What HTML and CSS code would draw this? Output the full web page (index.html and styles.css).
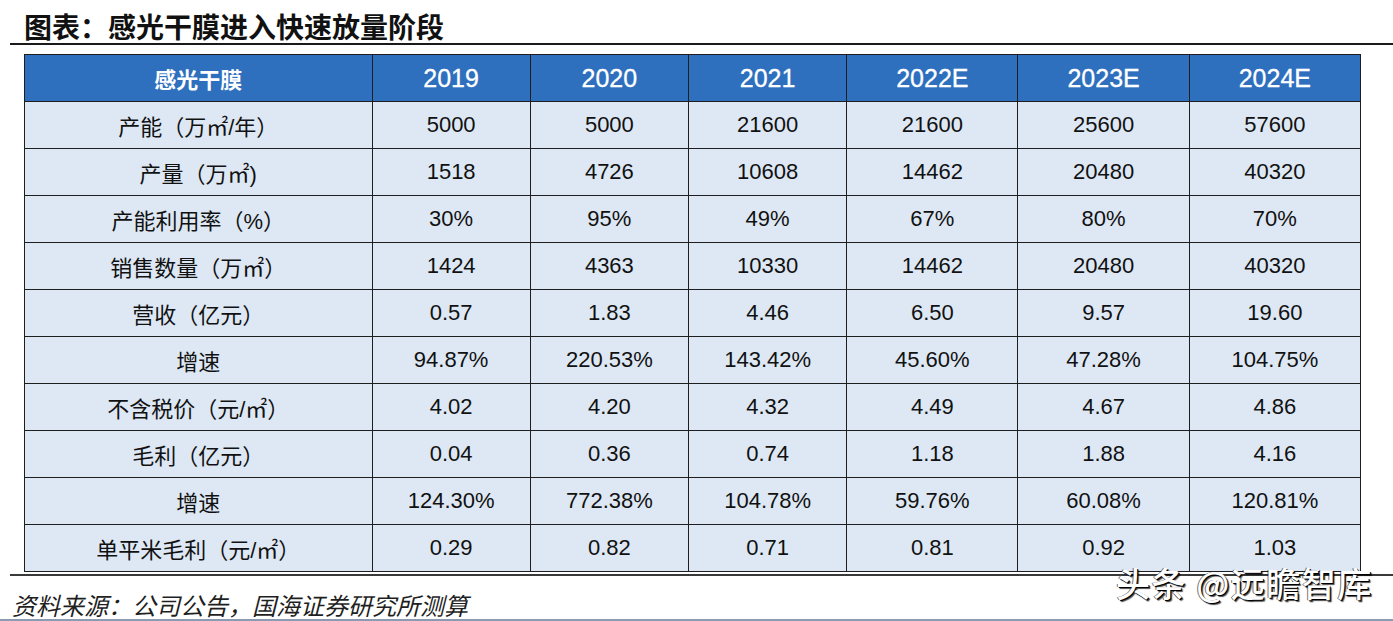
FILE: index.html
```html
<!DOCTYPE html>
<html lang="zh">
<head>
<meta charset="utf-8">
<title>图表：感光干膜进入快速放量阶段</title>
<link rel="stylesheet" href="styles.css">
</head>
<body>
<div class="page">
  <div class="title-bar">
    <h1 class="title">图表：感光干膜进入快速放量阶段</h1>
  </div>
  <table class="data">
    <colgroup>
      <col class="c-label"><col class="c-a"><col class="c-a"><col class="c-a"><col class="c-b"><col class="c-b"><col class="c-b">
    </colgroup>
    <thead>
      <tr><th class="label-head">感光干膜</th><th>2019</th><th>2020</th><th>2021</th><th>2022E</th><th>2023E</th><th>2024E</th></tr>
    </thead>
    <tbody>
      <tr><td class="label">产能（万㎡/年）</td><td>5000</td><td>5000</td><td>21600</td><td>21600</td><td>25600</td><td>57600</td></tr>
      <tr><td class="label">产量（万㎡)</td><td>1518</td><td>4726</td><td>10608</td><td>14462</td><td>20480</td><td>40320</td></tr>
      <tr><td class="label">产能利用率（%）</td><td>30%</td><td>95%</td><td>49%</td><td>67%</td><td>80%</td><td>70%</td></tr>
      <tr><td class="label">销售数量（万㎡）</td><td>1424</td><td>4363</td><td>10330</td><td>14462</td><td>20480</td><td>40320</td></tr>
      <tr><td class="label">营收（亿元）</td><td>0.57</td><td>1.83</td><td>4.46</td><td>6.50</td><td>9.57</td><td>19.60</td></tr>
      <tr><td class="label">增速</td><td>94.87%</td><td>220.53%</td><td>143.42%</td><td>45.60%</td><td>47.28%</td><td>104.75%</td></tr>
      <tr><td class="label">不含税价（元/㎡）</td><td>4.02</td><td>4.20</td><td>4.32</td><td>4.49</td><td>4.67</td><td>4.86</td></tr>
      <tr><td class="label">毛利（亿元）</td><td>0.04</td><td>0.36</td><td>0.74</td><td>1.18</td><td>1.88</td><td>4.16</td></tr>
      <tr><td class="label">增速</td><td>124.30%</td><td>772.38%</td><td>104.78%</td><td>59.76%</td><td>60.08%</td><td>120.81%</td></tr>
      <tr><td class="label">单平米毛利（元/㎡）</td><td>0.29</td><td>0.82</td><td>0.71</td><td>0.81</td><td>0.92</td><td>1.03</td></tr>
    </tbody>
  </table>
  <div class="rule-after"></div>
  <p class="source">资料来源：公司公告，国海证券研究所测算</p>
  <div class="rule-bottom"></div>
  <div class="watermark">头条 @远瞻智库</div>
</div>
</body>
</html>
```

FILE: styles.css
```css
html, body {
  margin: 0;
  padding: 0;
  background: #ffffff;
}

.page {
  position: relative;
  width: 1393px;
  height: 621px;
  overflow: hidden;
  font-family: "Liberation Sans", "Noto Sans CJK SC", sans-serif;
  color: #111;
}

.title-bar {
  margin-left: 10px;
  border-bottom: 2px solid #1a1a1a;
  height: 45px;
  box-sizing: border-box;
  padding-left: 14px;
}

.title {
  margin: 0;
  padding-top: 10px;
  font-family: "Noto Sans CJK SC", sans-serif;
  font-weight: 700;
  font-size: 28px;
  line-height: 32px;
  color: #111;
}

.data {
  margin: 9px 0 0 24px;
  border-collapse: collapse;
  table-layout: fixed;
  width: 1337px;
}

.c-label { width: 347px; }
.c-a { width: 158px; }
.c-b { width: 171px; }

.data th,
.data td {
  border: 1px solid #1e1e1e;
  padding: 0;
  text-align: center;
  vertical-align: middle;
  height: 47px;
  box-sizing: border-box;
}

.data th {
  background: #2e6fbe;
  color: #ffffff;
  font-weight: 400;
  font-size: 25px;
  -webkit-text-stroke: 0.3px #ffffff;
}

.data th.label-head {
  font-family: "Noto Sans CJK SC", sans-serif;
  font-size: 22px;
  font-weight: 700;
  -webkit-text-stroke: 0;
}

.data td {
  background: #dde8f4;
  font-size: 22px;
  color: #111;
}

.data td.label {
  font-family: "Liberation Sans", "Noto Sans CJK SC", sans-serif;
  font-size: 22px;
}

.rule-after {
  margin: 2px 0 0 10px;
  border-top: 2px solid #3a3a3a;
}

.source {
  margin: 0;
  padding: 15px 0 0 12px;
  height: 28px;
  font-family: "Noto Sans CJK SC", sans-serif;
  font-style: italic;
  font-size: 24px;
  line-height: 28px;
  color: #1f1f1f;
}

.rule-bottom {
  margin-top: 0;
  border-top: 2px solid #8c9bb2;
}

.watermark {
  position: absolute;
  left: 1116px;
  top: 562px;
  font-family: "Noto Sans CJK SC", sans-serif;
  font-size: 34px;
  line-height: 42px;
  letter-spacing: 1.5px;
  font-weight: 500;
  color: #ffffff;
  text-shadow: 1px 1px 0 #000, 2px 2px 1px rgba(0,0,0,0.7), -1px 0 0 rgba(0,0,0,0.6);
  white-space: nowrap;
}
```
